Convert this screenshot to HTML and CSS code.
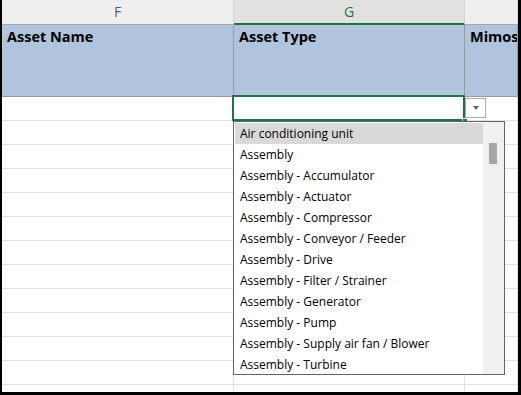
FILE: index.html
```html
<!DOCTYPE html>
<html lang="en">
<head>
    <meta charset="UTF-8">
    <title>Asset Register</title>
    <link rel="stylesheet" href="styles.css">
</head>
<body>

    <div class="frame">
        <div class="sheet">
            <!-- Column letters -->
            <div class="col-head">F</div>
            <div class="col-head active">G</div>
            <div class="col-head"></div>

            <!-- Header row -->
            <div class="title-cell">Asset Name</div>
            <div class="title-cell">Asset Type</div>
            <div class="title-cell">Mimosa</div>

            <!-- Data rows -->
            <div class="cell"></div><div class="cell"></div><div class="cell"></div>
            <div class="cell"></div><div class="cell"></div><div class="cell"></div>
            <div class="cell"></div><div class="cell"></div><div class="cell"></div>
            <div class="cell"></div><div class="cell"></div><div class="cell"></div>
            <div class="cell"></div><div class="cell"></div><div class="cell"></div>
            <div class="cell"></div><div class="cell"></div><div class="cell"></div>
            <div class="cell"></div><div class="cell"></div><div class="cell"></div>
            <div class="cell"></div><div class="cell"></div><div class="cell"></div>
            <div class="cell"></div><div class="cell"></div><div class="cell"></div>
            <div class="cell"></div><div class="cell"></div><div class="cell"></div>
            <div class="cell"></div><div class="cell"></div><div class="cell"></div>
            <div class="cell"></div><div class="cell"></div><div class="cell"></div>
            <div class="cell"></div><div class="cell"></div><div class="cell"></div>
        </div>

        <!-- Selected cell outline -->
        <div class="selection"><span class="fill-handle"></span></div>

        <!-- Validation dropdown button -->
        <div class="drop-btn"><span class="arrow"></span></div>

        <!-- Validation list -->
        <div class="drop-list">
            <ul class="items">
                <li class="hover">Air conditioning unit</li>
                <li>Assembly</li>
                <li>Assembly - Accumulator</li>
                <li>Assembly - Actuator</li>
                <li>Assembly - Compressor</li>
                <li>Assembly - Conveyor / Feeder</li>
                <li>Assembly - Drive</li>
                <li>Assembly - Filter / Strainer</li>
                <li>Assembly - Generator</li>
                <li>Assembly - Pump</li>
                <li>Assembly - Supply air fan / Blower</li>
                <li>Assembly - Turbine</li>
            </ul>
            <div class="scrollbar"><span class="thumb"></span></div>
        </div>
    </div>

</body>
</html>
```

FILE: styles.css
```css
* {
    margin: 0;
    padding: 0;
    box-sizing: border-box;
}

body {
    background: #000;
    width: 521px;
    height: 395px;
    overflow: hidden;
}

/* Black screenshot frame round the sheet */
.frame {
    position: relative;
    width: 521px;
    height: 395px;
    background: #fff;
    border-left: 2px solid #000;
    border-right: 3px solid #000;
    border-bottom: 3px solid #000;
    overflow: hidden;
}

/* Grid of cells */
.sheet {
    display: grid;
    grid-template-columns: 232px 231px 1fr;
    grid-template-rows: 25px 72px repeat(13, 24px);
}

.col-head {
    background: #efefef;
    border-right: 1px solid #d4d4d4;
    border-bottom: 1px solid #a6a6a6;
    font-family: "Open Sans", sans-serif;
    font-size: 14px;
    color: #4a5a80;
    text-align: center;
    line-height: 24px;
}

.col-head.active {
    background: #e1e1e1;
    color: #217346;
    border-bottom: 2px solid #217346;
    line-height: 23px;
}

.title-cell {
    background: #b0c4de;
    border-right: 1px solid #9b9b9b;
    border-bottom: 1px solid #9b9b9b;
    font-family: "Open Sans", sans-serif;
    font-weight: 700;
    font-size: 14.5px;
    color: #000;
    padding: 2px 0 0 5px;
    white-space: nowrap;
    overflow: hidden;
}

.cell {
    border-right: 1px solid #e1e1e1;
    border-bottom: 1px solid #e1e1e1;
}

/* Active cell */
.selection {
    position: absolute;
    left: 230px;
    top: 95px;
    width: 233px;
    height: 26px;
    border: 2px solid #217346;
}

.fill-handle {
    position: absolute;
    right: -5px;
    bottom: -5px;
    width: 6px;
    height: 6px;
    background: #217346;
    border: 1px solid #fff;
}

.drop-btn {
    position: absolute;
    left: 463px;
    top: 98px;
    width: 21px;
    height: 20px;
    background: #fff;
    border: 1px solid #ababab;
    display: flex;
    align-items: center;
    justify-content: center;
}

.arrow {
    width: 0;
    height: 0;
    border-left: 3.5px solid transparent;
    border-right: 3.5px solid transparent;
    border-top: 4px solid #606060;
}

/* Dropdown list */
.drop-list {
    position: absolute;
    left: 231px;
    top: 121px;
    width: 272px;
    height: 254px;
    background: #fff;
    border: 1px solid #646464;
    display: flex;
}

.items {
    list-style: none;
    flex: 1;
    padding: 1px 0 0 1px;
    font-family: "Open Sans", sans-serif;
    font-size: 12px;
    color: #000;
}

.items li {
    height: 21px;
    line-height: 21px;
    padding-left: 5px;
    white-space: nowrap;
}

.items li.hover {
    background: #d9d9d9;
}

.scrollbar {
    width: 21px;
    background: #f0f0f0;
    padding: 21px 0 0 6px;
}

.thumb {
    display: block;
    width: 8px;
    height: 21px;
    background: #a6a6a6;
}
```
